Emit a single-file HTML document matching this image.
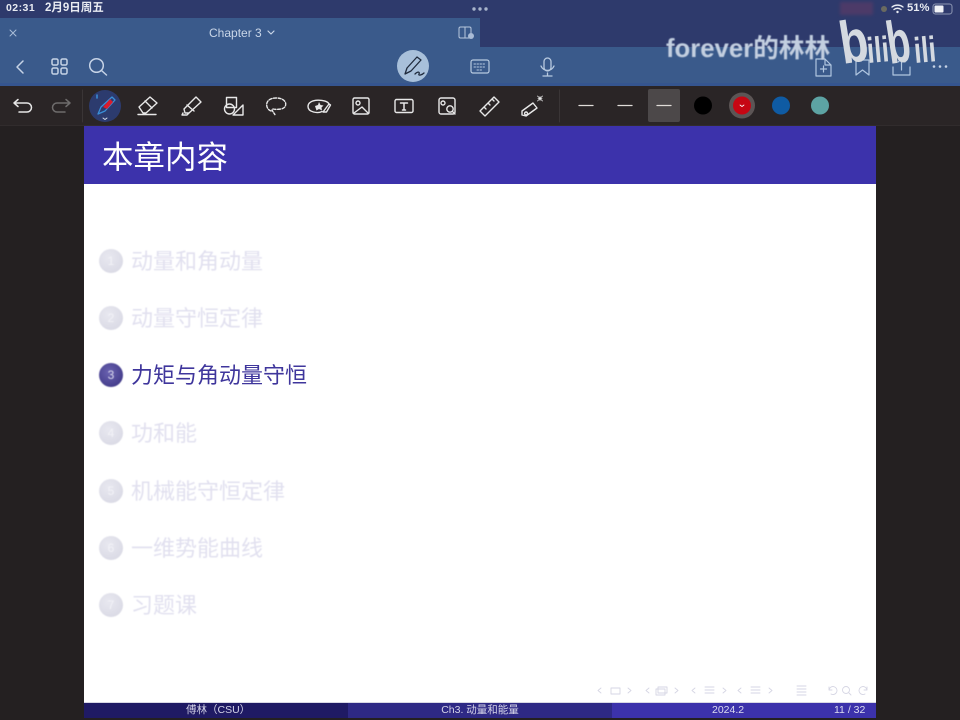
<!DOCTYPE html>
<html lang="zh"><head><meta charset="utf-8"><title>Chapter 3</title>
<style>
*{margin:0;padding:0;box-sizing:border-box}
html,body{width:960px;height:720px;overflow:hidden;background:#242021;font-family:"Liberation Sans","Noto Sans CJK SC",sans-serif}
.a{position:absolute}
.t{white-space:nowrap}
.item{position:absolute;left:131px;font-size:22px;line-height:30px;color:#e1e0ef;white-space:nowrap;filter:blur(.5px)}
.num{position:absolute;left:99px;width:24px;height:24px;border-radius:50%;background:radial-gradient(circle at 40% 35%,#e8e8f0,#d6d6e2);color:#f2f2f7;font-size:12px;line-height:24px;text-align:center;filter:blur(.4px)}
svg{position:absolute;left:0;top:0;overflow:visible}
</style></head><body>
<div class="a" style="left:0;top:0;width:960px;height:47px;background:#2e3a6c"></div>
<div class="a" style="left:0;top:18px;width:480px;height:30px;background:#3a5a8b"></div>
<div class="a" style="left:0;top:47px;width:960px;height:39px;background:#3a5a8b"></div>
<div class="a" style="left:0;top:83px;width:960px;height:3px;background:#35558f"></div>
<div class="a" style="left:0;top:86px;width:960px;height:39px;background:#2a2526"></div>
<div class="a" style="left:0;top:125px;width:960px;height:1px;background:#312c2d"></div>

<div class="a t" style="left:6px;top:2px;font-size:10.5px;line-height:13px;font-weight:bold;color:#e8ebf2;letter-spacing:.45px">02:31</div>
<div class="a t" style="left:45px;top:2px;font-size:11.500px;line-height:13px;font-weight:bold;color:#e8ebf2">2月9日周五</div>
<div class="a" style="left:840px;top:2px;width:33px;height:13px;background:#4c3a68;filter:blur(1.5px)"></div>
<div class="a" style="left:881px;top:6px;width:6px;height:6px;border-radius:50%;background:#6a6a60"></div>
<div class="a t" style="left:907px;top:2px;font-size:11.200px;line-height:13px;font-weight:bold;color:#e8ebf2">51%</div>
<div class="a t" style="left:209px;top:25px;font-size:12px;line-height:16px;color:#c9d6e8">Chapter 3</div>

<div class="a" style="left:84px;top:126px;width:792px;height:592px;background:#fff"></div>
<div class="a" style="left:84px;top:126px;width:792px;height:58px;background:#3c32ab"></div>
<div class="a t" style="left:102px;top:136px;font-size:31.500px;line-height:42px;color:#fff">本章内容</div>

<div class="num" style="top:249px">1</div><div class="item" style="top:247px">动量和角动量</div>
<div class="num" style="top:306px">2</div><div class="item" style="top:304px">动量守恒定律</div>
<div class="num" style="top:363px;background:radial-gradient(circle at 42% 38%,#6a62b0,#37307f);color:#dcdcf0">3</div><div class="item" style="top:361px;color:#3f369c;filter:blur(.3px)">力矩与角动量守恒</div>
<div class="num" style="top:421px">4</div><div class="item" style="top:419px">功和能</div>
<div class="num" style="top:479px">5</div><div class="item" style="top:477px">机械能守恒定律</div>
<div class="num" style="top:536px">6</div><div class="item" style="top:534px">一维势能曲线</div>
<div class="num" style="top:593px">7</div><div class="item" style="top:591px">习题课</div>

<div class="a" style="left:84px;top:702px;width:792px;height:1px;background:#d8d8e4"></div>
<div class="a" style="left:84px;top:703px;width:264px;height:15px;background:#1f1a64"></div>
<div class="a" style="left:348px;top:703px;width:264px;height:15px;background:#2e2985"></div>
<div class="a" style="left:612px;top:703px;width:264px;height:15px;background:#3c32ab"></div>
<div class="a t" style="left:186px;top:703px;font-size:10.5px;line-height:15px;color:#d4d3e8">傅林（CSU）</div>
<div class="a t" style="left:348px;top:703px;width:264px;text-align:center;font-size:10.5px;line-height:15px;color:#d4d3e8">Ch3. 动量和能量</div>
<div class="a t" style="left:712px;top:703px;font-size:10.5px;line-height:15px;color:#dcdcf0">2024.2</div>
<div class="a t" style="left:834px;top:703px;font-size:10.5px;line-height:15px;color:#dcdcf0">11 / 32</div>

<svg width="960" height="720" viewBox="0 0 960 720" fill="none" stroke-linecap="round" stroke-linejoin="round">
 <!-- top small -->
 <g fill="#a9b5cc"><circle cx="474" cy="9" r="1.7"/><circle cx="480" cy="9" r="1.7"/><circle cx="486" cy="9" r="1.7"/></g>
 <path d="M10 30l6 6M16 30l-6 6" stroke="#a9bcd6" stroke-width="1"/>
 <path d="M268 31l3 3 3-3" stroke="#c9d6e8" stroke-width="1.2"/>
 <rect x="459" y="27" width="12" height="11" rx="1.5" stroke="#b8c8de" stroke-width="1"/><path d="M465 27v11" stroke="#b8c8de"/><circle cx="471" cy="36" r="3" fill="#a9bcd6"/>
 <!-- wifi + battery -->
 <path d="M892 7a9 9 0 0 1 11 0M894 9.5a5.500 5.500 0 0 1 7 0" stroke="#e8ebf2" stroke-width="1.4"/><circle cx="897.500" cy="12" r="1.200" fill="#e8ebf2"/>
 <rect x="933" y="4" width="19" height="10" rx="2.500" stroke="#8e98b4" stroke-width="1"/><rect x="934.500" y="5.500" width="9" height="7" rx="1" fill="#f0f2f6"/>
 <!-- nav -->
 <g stroke="#c6d3e6" stroke-width="1.5">
  <path d="M23 61l-6 6 6 6"/>
  <rect x="52" y="59" width="6" height="6" rx="1.500"/><rect x="61" y="59" width="6" height="6" rx="1.500"/><rect x="52" y="68" width="6" height="6" rx="1.500"/><rect x="61" y="68" width="6" height="6" rx="1.500"/>
  <circle cx="96.500" cy="65.500" r="6.800"/><path d="M101.500 70.500l5 4.500"/>
 </g>
 <circle cx="413" cy="66" r="16" fill="#a8c0da"/>
 <path d="M405 74l2-6 10-11 4 3-10 11zM417 57l4 3M415 74c3-3 5-2 4 0s3 1 5-1" stroke="#1f2a3c" stroke-width="1.300"/>
 <rect x="471" y="60" width="18" height="13" rx="2" stroke="#b8cae0" stroke-width="1.200"/><path d="M474 64h12M474 67h12M477 70h6" stroke="#b8cae0" stroke-dasharray="1.500 1.500"/>
 <rect x="544" y="58" width="7" height="13" rx="3.500" stroke="#b8cae0" stroke-width="1.300"/><path d="M541 66a7 7 0 0 0 13 0M547.500 73v3M543 76h9" stroke="#b8cae0" stroke-width="1.300"/>
 <path d="M816 59h9l6 6v11h-15zM825 59v6h6M823.500 66v6M820.500 69h6" stroke="#b0c6e0" stroke-width="1.200"/>
 <path d="M856 60h13v15l-6.500-5-6.500 5z" stroke="#b0c6e0" stroke-width="1.200"/>
 <path d="M893 67v8h17v-8M901.500 70v-11M898 62l3.500-3 3.500 3" stroke="#b0c6e0" stroke-width="1.200"/>
 <g fill="#c6d3e6"><circle cx="934" cy="66.500" r="1.300"/><circle cx="940" cy="66.500" r="1.300"/><circle cx="946" cy="66.500" r="1.300"/></g>

 <!-- tools -->
 <path d="M82.500 90v32M559.500 90v32" stroke="#3a3536"/>
 <g stroke-width="1.500">
  <path d="M18 99.500l-4 3.500 4 3.500M15 103h12a4.500 4.500 0 0 1 0 9h-8" stroke="#e6e6e6"/>
  <path d="M66 99.500l4 3.500-4 3.500M69 103h-12a4.500 4.500 0 0 0 0 9h8" stroke="#6e6c6c"/>
 </g>
 <circle cx="105" cy="106" r="16" fill="#2c3b6e"/>
 <path d="M98 114l3-7 11-10 3 3-10 11z" stroke="#3a8fd8" stroke-width="1.300"/><path d="M103 107l7-8 3 3-6 7z" fill="#d91c2c"/><path d="M103 118l2 1.500 2-1.500" stroke="#d6dbe6"/><path d="M97 95v3" stroke="#3a8fd8" stroke-width="1.500"/>
 <g stroke="#e8e8e8" stroke-width="1.400">
  <path d="M139 107l11-10 7 6-11 10h-3zM145 101l7 7M138 114.500h18"/>
  <path d="M184 109l12-12 5 5-12 11-4 0zM187 105l7 6M183 113l-1 2h5l2-2"/>
  <rect x="226.500" y="97.500" width="10" height="10"/><circle cx="229.500" cy="109" r="5"/><path d="M243 105v10h-10z"/>
  <path d="M271 111c-6-2-7-13 5-13s12 10 5 11c-3 .5-6 .5-8 0" stroke-dasharray="3 1.600"/><path d="M272 110c1 2 2 3 3.500 5.500" stroke-dasharray="2 1.500"/>
  <path d="M329 104c-2-5-21-6-21 2.500 0 6 10 7 14 5"/><path d="M315 106l3-1 1-3 1.500 3 3 .5-2 2 .5 3-3-1.500-2.500 1.500z" fill="#e8e8e8" stroke="none"/><path d="M323 112l6-8 1.500 1-4 7z"/>
  <rect x="353" y="98" width="16" height="16" rx="1.500"/><path d="M354 113l8-6 6 6"/><circle cx="358" cy="103" r="2"/>
  <rect x="395" y="99.500" width="18" height="13" rx="1.500"/><path d="M400.500 103h7M404 103v7M402.500 110h3" stroke-width="1.500"/>
  <rect x="439" y="98" width="16" height="16" rx="2"/><circle cx="443" cy="103" r="2"/><circle cx="450" cy="109" r="3.200"/><path d="M452.500 111.500l2.500 2.500"/>
  <path d="M480 111l14-14 5 5-14 14zM484 107l2 2M488 103l2 2M492 99l2 2"/>
  <path d="M522 111l11-8 4 5-11 8-4-1zM526 112a1.500 1.500 0 1 0 .1 0"/><path d="M538 98.500h4M540 96.500v4M537.500 96l5 5M542.500 96l-5 5" stroke-width=".8"/>
 </g>
 <!-- pens -->
 <rect x="648" y="89" width="32" height="33" rx="2" fill="#4c4849"/>
 <path d="M579 105.500h14M618 105.500h14M657 105.500h14" stroke="#e0dcd8" stroke-width="1.300"/>
 <circle cx="703" cy="105.500" r="9" fill="#000"/>
 <circle cx="742" cy="105.500" r="13" fill="#5c5555"/><circle cx="742" cy="105.500" r="9" fill="#c60613"/><path d="M740 105l2 1.500 2-1.500" stroke="#fff" stroke-width=".8"/>
 <circle cx="781" cy="105.500" r="9" fill="#0f5ba3"/>
 <circle cx="820" cy="105.500" r="9" fill="#5da3a3"/>

 <!-- beamer nav -->
 <g stroke="#d6d6e4" stroke-width=".9" fill="none">
  <path d="M601 688l-3 2.500 3 2.500"/><rect x="611" y="688" width="9" height="6"/><path d="M628 688l3 2.500-3 2.500"/>
  <path d="M649 688l-3 2.500 3 2.500"/><rect x="656" y="689" width="9" height="6"/><rect x="658" y="687" width="9" height="6"/><path d="M675 688l3 2.500-3 2.500"/>
  <path d="M695 688l-3 2.500 3 2.500M705 687h9M705 690h9M705 693h9M723 688l3 2.500-3 2.500"/>
  <path d="M741 688l-3 2.500 3 2.500M751 687h9M751 690h9M751 693h9M769 688l3 2.500-3 2.500"/>
  <path d="M797 686h9M797 689h9M797 692h9M797 695h9"/>
  <path d="M829 690a4 4 0 1 1 2 4M829 687v3h3"/><circle cx="846" cy="690" r="3.500"/><path d="M849 693l2 2"/><path d="M867 690a4 4 0 1 0-2 4M867 687v3h-3"/>
 </g>
</svg>

<!-- watermark -->
<div class="a t" style="left:666px;top:33px;font-size:25.700px;line-height:32px;font-weight:bold;color:#c3cfe0;filter:blur(.4px)">forever的林林</div>
<svg width="960" height="720" viewBox="0 0 960 720" style="filter:blur(.3px)">
 <g fill="#d4d9e0" font-family="'Liberation Sans',sans-serif" font-weight="bold">
  <text transform="translate(843 64) rotate(-9) scale(1.150 1.500)" font-size="40">b</text>
  <text transform="translate(868 63) rotate(-5) scale(1.100 1.500)" font-size="24">ili</text>
  <text transform="translate(890 64) rotate(-9) scale(.95 1.500)" font-size="40">b</text>
  <text transform="translate(915 63) rotate(-5) scale(1.100 1.500)" font-size="24">ili</text>
 </g>
</svg>
</body></html>
